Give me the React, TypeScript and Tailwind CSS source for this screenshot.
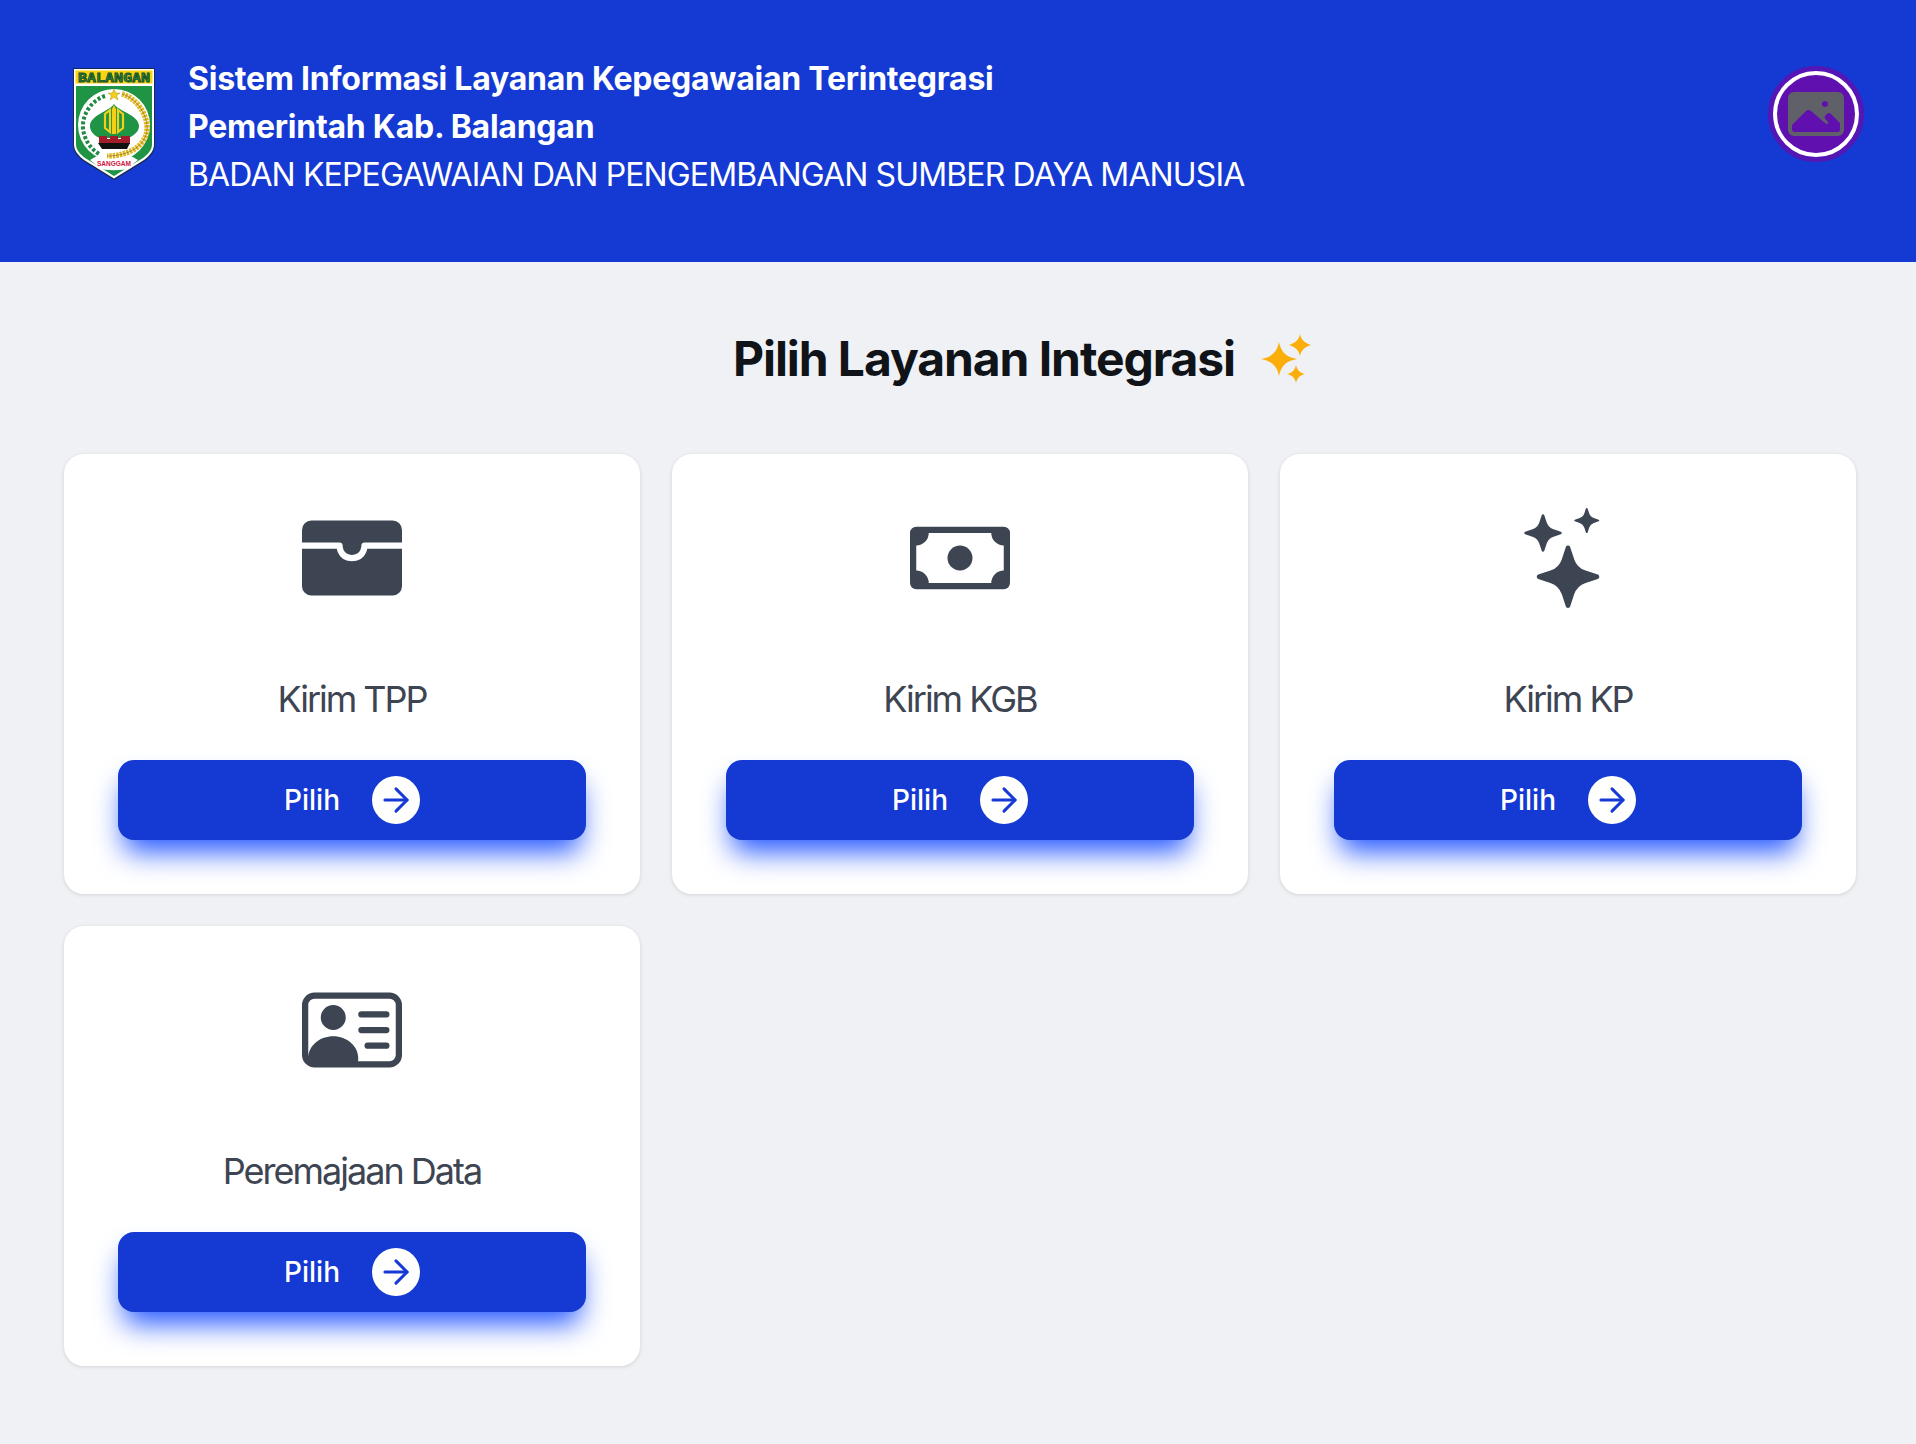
import React from 'react';
import { BsWalletFill, BsCash, BsStars, BsPersonVcard } from 'react-icons/bs';
import { ArrowRight } from 'lucide-react';

const services = [
  { label: 'Kirim TPP', Icon: BsWalletFill },
  { label: 'Kirim KGB', Icon: BsCash },
  { label: 'Kirim KP', Icon: BsStars },
  { label: 'Peremajaan Data', Icon: BsPersonVcard },
];

// Crest of Kab. Balangan, simplified
const Logo = () => (
  <svg viewBox="0 0 82 112" className="w-[82px] h-[112px] shrink-0">
    <path d="M0 0H82V76C82 84 78 88 72 93L41 112L10 93C4 88 0 84 0 76Z" fill="#1b2a4a" />
    <path d="M1 1H81V76C81 83 77 87 71 92L41 110.500L11 92C5 87 1 83 1 76Z" fill="#fff" />
    <rect x="2.500" y="2.500" width="77" height="13" fill="#f7d312" />
    <text x="41" y="13.500" textAnchor="middle" fontFamily="'DejaVu Sans Mono', monospace" fontWeight="700" fontSize="12" fill="#2a8a3c" stroke="#14502a" strokeWidth="0.8" textLength="72" lengthAdjust="spacingAndGlyphs">BALANGAN</text>
    <path d="M3 18H79V76C79 82 75 86 70 90L41 108L12 90C7 86 3 82 3 76Z" fill="#1f9444" />
    <circle cx="41" cy="57" r="36" fill="#fff" />
    <path d="M41 36C37 43 17 47 17 58C17 64 22 68 27 70H55C60 68 66 64 66 58C66 47 45 43 41 36Z" fill="#1f9444" />
    <path d="M49 26C63 30 75 46 74 62C73 76 58 88 34 88" fill="none" stroke="#e3b81f" strokeWidth="5.500" strokeDasharray="2.500 1" />
    <path d="M49 26C63 30 75 46 74 62C73 76 58 88 34 88" fill="none" stroke="#7a6a10" strokeWidth="0.6" />
    <path d="M32 28C19 32 9 46 10 60C11 72 18 81 26 86" fill="none" stroke="#1f8a44" strokeWidth="4" strokeDasharray="3 2" />
    <path d="M41 21L42.800 25H47L43.600 27.500L45 32L41 29.300L37 32L38.400 27.500L35 25H39.200Z" fill="#f4cf1a" stroke="#9a8412" strokeWidth="0.4" />
    <path d="M41 37L43 41V66H39V41Z" fill="#f4cf1a" />
    <path d="M37 42L32 46V60L37 64ZM45 42L50 46V60L45 64Z" fill="none" stroke="#f4cf1a" strokeWidth="2.200" />
    <path d="M26 68H34V71H37V68H45V71H48V68H57V76H26Z" fill="#a31c2c" />
    <path d="M25 75H57L54 81H29Z" fill="#111" />
    <path d="M17 92L24 88C33 92 49 92 58 88L65 92L60 96L58 100C49 103 33 103 24 100L22 96Z" fill="#fff" />
    <text x="41" y="98" textAnchor="middle" fontFamily="'Liberation Sans', sans-serif" fontWeight="700" fontSize="6.500" fill="#d0143c">SANGGAM</text>
  </svg>
);

// blank avatar placeholder
const BlankImage = () => (
  <svg viewBox="0 0 56 44" className="w-14 h-11" fill="none">
    <path fillRule="evenodd" clipRule="evenodd" d="M6 0H50A6 6 0 0 1 56 6V38A6 6 0 0 1 50 44H6A6 6 0 0 1 0 38V6A6 6 0 0 1 6 0ZM4 33V37C4 39 5 40 7 40H50C51 40 52 39 52 37V31L43 22C41.500 20.500 40 21 39 22L37 24C35.500 25.500 38 27.500 40 30C40.500 32 38.500 33 37 31L23 19C21.500 17.500 19.500 17.500 18 19ZM34 12A3 3 0 1 0 40 12A3 3 0 0 0 34 12Z" fill="#5f6068" />
  </svg>
);

// page title sparkle
const Sparkle = () => (
  <svg viewBox="0 0 50 50" className="w-[50px] h-[50px] shrink-0" fill="#fbae0a">
    <path d="M18 8C20 18 25 23 36 25C25 27 20 32 18 42C16 32 11 27 0 25C11 23 16 18 18 8Z" />
    <path d="M39 0C40 6 44 9 50 11C44 13 40 16 39 22C38 16 34 13 28 11C34 9 38 6 39 0Z" />
    <path d="M35 31C36 36 39 39 44 40C39 41 36 44 35 49C34 44 31 41 26 40C31 39 34 36 35 31Z" />
  </svg>
);

const ServiceCard = ({ label, Icon }: { label: string; Icon: React.ComponentType<{ className?: string }> }) => (
  <div className="bg-white rounded-[20px] shadow-[0_1px_4px_rgba(0,0,0,0.12)] p-[54px] flex flex-col items-center h-[440px]">
    <Icon className="w-[100px] h-[100px] text-[#3d4452]" />
    <div className="mt-[64px] text-[36px] leading-[54px] text-[#3d4452] tracking-[-2px]">{label}</div>
    <button className="mt-auto w-full h-[80px] rounded-[16px] bg-[#1539d3] text-white text-[28px] font-medium flex items-center justify-center gap-[32px] shadow-[0_18px_28px_-6px_rgba(40,90,255,1)]">
      <span>Pilih</span>
      <span className="w-12 h-12 rounded-full bg-white flex items-center justify-center">
        <ArrowRight size={38} strokeWidth={1.9} className="text-[#1539d3]" />
      </span>
    </button>
  </div>
);

export default function App() {
  return (
    <div className="min-h-[1444px] bg-[#eff1f5] font-['Inter',sans-serif]">
      <header className="bg-[#1539d3] h-[262px] pl-[73px] pr-[52px] pt-[55px] flex items-start">
        <div className="mt-[13px]"><Logo /></div>
        <div className="ml-[33px] text-white text-[32px] leading-[48px]">
          <div className="font-bold tracking-[-0.25px]">Sistem Informasi Layanan Kepegawaian Terintegrasi</div>
          <div className="font-bold tracking-[-0.25px]">Pemerintah Kab. Balangan</div>
          <div className="tracking-[-0.87px]">BADAN KEPEGAWAIAN DAN PENGEMBANGAN SUMBER DAYA MANUSIA</div>
        </div>
        <div className="ml-auto mt-[11px] w-[96px] h-[96px] rounded-full bg-[#6110b0] border-[5px] border-[#5416b4] flex items-center justify-center">
          <div className="w-[86px] h-[86px] rounded-full border-[4px] border-white flex items-center justify-center">
            <BlankImage />
          </div>
        </div>
      </header>
      <main className="pl-[64px] pr-[60px]">
        <div className="h-[192px] pl-[124px] pt-[2px] flex items-center justify-center gap-[26px]">
          <h1 className="text-[48px] font-bold text-[#101418] tracking-[-1.080px]">Pilih Layanan Integrasi</h1>
          <Sparkle />
        </div>
        <div className="grid grid-cols-3 gap-[32px]">
          {services.map((s) => (
            <ServiceCard key={s.label} label={s.label} Icon={s.Icon} />
          ))}
        </div>
      </main>
    </div>
  );
}
